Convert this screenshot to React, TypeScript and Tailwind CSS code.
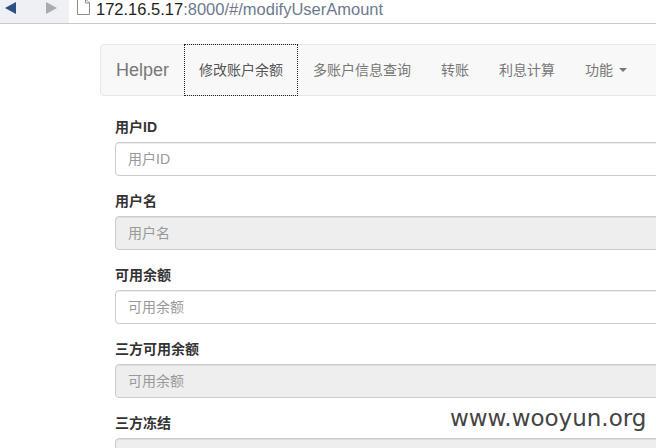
import React from 'react';

const navItems = ['多账户信息查询', '转账', '利息计算'];

const fields = [
  { label: '用户ID', placeholder: '用户ID', disabled: false },
  { label: '用户名', placeholder: '用户名', disabled: true },
  { label: '可用余额', placeholder: '可用余额', disabled: false },
  { label: '三方可用余额', placeholder: '可用余额', disabled: true },
  { label: '三方冻结', placeholder: '', disabled: true },
];

const font = { fontFamily: '"Liberation Sans", "Noto Sans CJK SC", sans-serif' };

export default function App() {
  return (
    <div className="relative w-[656px] h-[448px] overflow-hidden bg-white text-[14px] text-[#333]" style={font}>
      {/* browser chrome */}
      <div className="flex h-[24px] border-b border-[#c9c9c9] bg-[#eef0f3]">
        <div className="flex w-[69px] items-start gap-[30px] pl-[5px] pt-[2px]">
          <svg width="11" height="12" viewBox="0 0 11 12"><path d="M11 0 L0 6 L11 12 Z" fill="#2c4f86" /></svg>
          <svg width="11" height="12" viewBox="0 0 11 12"><path d="M0 0 L11 6 L0 12 Z" fill="#a9abaf" /></svg>
        </div>
        <div className="flex flex-1 items-start bg-white pl-[8px]">
          <svg width="13" height="16" viewBox="0 0 13 16" className="mt-[-1px]">
            <path d="M0.5 0 V15.5 H12.5 V4 L8.5 0" fill="#fff" stroke="#8c8c8c" />
            <path d="M8.5 0 V4 H12.5" fill="none" stroke="#8c8c8c" />
          </svg>
          <span className="ml-[6px] text-[16.5px] leading-[18px]">
            <span className="text-[#1e1e1e]">172.16.5.17</span>
            <span className="text-[#6c7a8e]">:8000/#/modifyUserAmount</span>
          </span>
        </div>
      </div>

      <div className="ml-[100px] mt-[20px] w-[1000px]">
        {/* navbar */}
        <div className="flex h-[52px] rounded-[4px] border border-[#e7e7e7] bg-[#f8f8f8] text-[#777]">
          <div className="px-[15px] text-[18px] leading-[50px]">Helper</div>
          <div className="px-[15px] leading-[50px] text-[#555] outline outline-1 outline-dotted outline-[#222] outline-offset-[-1px] h-[52px] mt-[-1px] pt-[1px]">
            修改账户余额
          </div>
          {navItems.map((n) => (
            <div key={n} className="px-[15px] leading-[50px]">{n}</div>
          ))}
          <div className="flex items-center px-[15px] leading-[50px]">
            功能
            <span className="ml-[6px] inline-block h-0 w-0 border-x-[4px] border-t-[4px] border-x-transparent border-t-[#777]" />
          </div>
        </div>

        {/* form */}
        <div className="mt-[21px] px-[15px]">
          {fields.map((f) => (
            <div key={f.label} className="mb-[15px]">
              <div className="mb-[5px] font-bold leading-[20px]">{f.label}</div>
              <div
                className={`h-[34px] rounded-[4px] border border-[#ccc] px-[12px] leading-[32px] text-[#999] shadow-[inset_0_1px_1px_rgba(0,0,0,0.075)] ${
                  f.disabled ? 'bg-[#eee]' : 'bg-white'
                }`}
              >
                {f.placeholder}
              </div>
            </div>
          ))}
        </div>
      </div>

      <span
        className="absolute left-[450px] top-[405px] text-[23px] leading-[26px] text-[#444]"
        style={{ fontFamily: '"DejaVu Sans", sans-serif' }}
      >
        www.wooyun.org
      </span>
    </div>
  );
}
